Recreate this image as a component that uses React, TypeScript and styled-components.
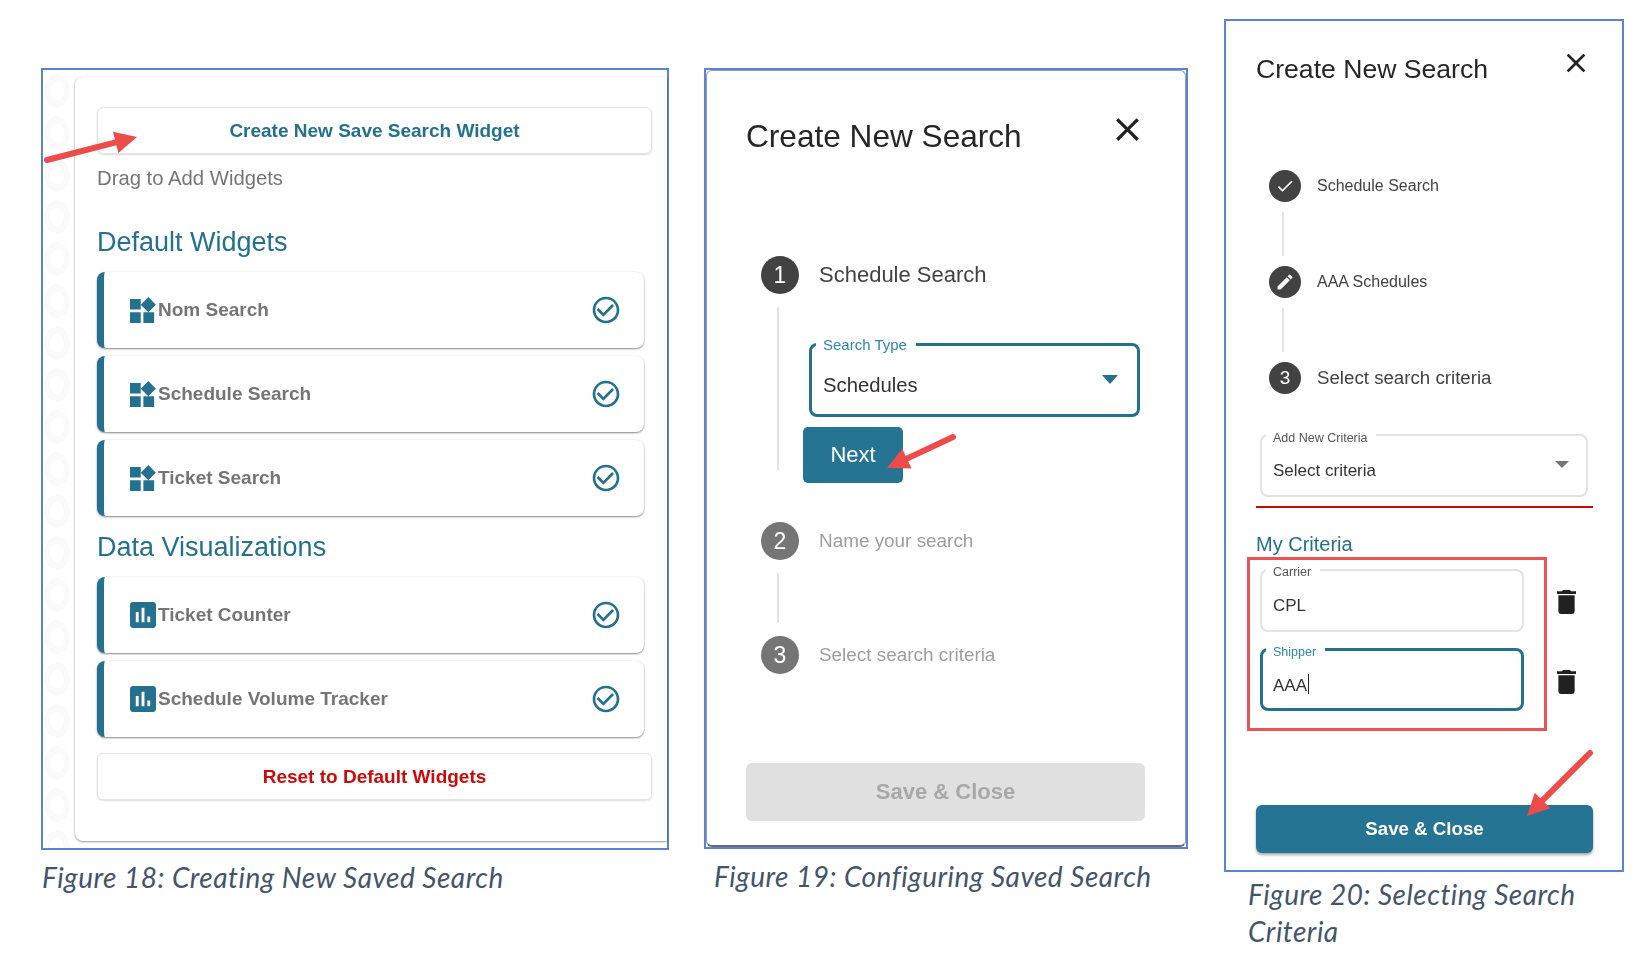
import React from 'react';
import styled, { createGlobalStyle } from 'styled-components';

const TEAL = '#23718f';
const FRAME_BLUE = '#5b82d4';
const SANS = '"Liberation Sans", Arial, sans-serif';

const GlobalStyle = createGlobalStyle`
  html, body {
    margin: 0;
    padding: 0;
    background: #fff;
    font-family: ${SANS};
  }
`;

const Page = styled.div`
  display: flex;
  align-items: flex-start;
  width: 1644px;
  height: 960px;
  padding-left: 41px;
  box-sizing: border-box;
  overflow: hidden;
`;

const Figure = styled.figure<{ $width: number; $top: number; $gap: number }>`
  width: ${({ $width }) => $width}px;
  margin: ${({ $top }) => $top}px 0 0 ${({ $gap }) => $gap}px;
  flex: none;
`;

const Frame = styled.div<{ $height: number }>`
  position: relative;
  height: ${({ $height }) => $height}px;
  box-sizing: border-box;
  border: 2px solid ${FRAME_BLUE};
  background: #fff;
  display: flex;
  filter: blur(0.4px);
`;

const Caption = styled.figcaption<{ $top: number; $left: number; $width?: number }>`
  margin: ${({ $top }) => $top}px 0 0 ${({ $left }) => $left}px;
  width: ${({ $width }) => ($width ? `${$width}px` : 'auto')};
  font: italic 400 28px/37px Lato, "Open Sans", sans-serif;
  letter-spacing: 0.5px;
  color: #44546a;
  white-space: ${({ $width }) => ($width ? 'normal' : 'nowrap')};
`;

const ArrowSvg = styled.svg`
  position: absolute;
  left: 0;
  top: 0;
  width: 100%;
  height: 100%;
  overflow: visible;
  pointer-events: none;
`;

function Arrow({ from, to }: { from: [number, number]; to: [number, number] }) {
  const angle = Math.atan2(to[1] - from[1], to[0] - from[0]);
  const len = 22;
  const half = 11;
  const bx = to[0] - Math.cos(angle) * len;
  const by = to[1] - Math.sin(angle) * len;
  const nx = -Math.sin(angle) * half;
  const ny = Math.cos(angle) * half;
  return (
    <ArrowSvg>
      <line x1={from[0]} y1={from[1]} x2={bx} y2={by} stroke="#ee4b4b" strokeWidth={6} strokeLinecap="round" />
      <polygon points={`${to[0]},${to[1]} ${bx + nx},${by + ny} ${bx - nx},${by - ny}`} fill="#ee4b4b" />
    </ArrowSvg>
  );
}

/* figure 18 */

const WatermarkStrip = styled.div`
  width: 32px;
  flex: none;
  background-color: #fff;
  background-image: radial-gradient(ellipse 13px 17px at 14px 21px, transparent 50%, #fafafa 58%, #fafafa 96%, transparent 100%);
  background-size: 32px 42px;
`;

const WidgetCard = styled.div`
  flex: 1;
  margin: 7px 0 7px;
  padding: 30px 15px 0 22px;
  background: #fff;
  border-radius: 8px 0 0 8px;
  box-shadow: 0 1px 2px rgba(0, 0, 0, 0.4), -1px 0 2px rgba(0, 0, 0, 0.06);
`;

const OutlineButton = styled.div<{ $color: string; $top: number }>`
  height: 47px;
  margin-top: ${({ $top }) => $top}px;
  box-sizing: border-box;
  display: flex;
  align-items: center;
  justify-content: center;
  border: 1px solid #e4e4e4;
  border-radius: 6px;
  box-shadow: 0 1px 2px rgba(0, 0, 0, 0.14);
  font-size: 19px;
  font-weight: 700;
  color: ${({ $color }) => $color};
`;

const DragHint = styled.div`
  margin-top: 12px;
  font-size: 20.3px;
  line-height: 24px;
  color: #757575;
`;

const GroupHeading = styled.h2<{ $top: number }>`
  margin: ${({ $top }) => $top}px 0 14px;
  font-size: 27px;
  font-weight: 400;
  line-height: 32px;
  color: ${TEAL};
`;

const WidgetList = styled.div`
  display: flex;
  flex-direction: column;
  gap: 8px;
  margin-right: 8px;
`;

const WidgetRow = styled.div`
  height: 76px;
  box-sizing: border-box;
  display: flex;
  align-items: center;
  padding: 0 25px 0 26px;
  border-left: 7px solid ${TEAL};
  border-radius: 8px;
  background: #fff;
  box-shadow: 0 1px 2px rgba(0, 0, 0, 0.45), 0 0 3px rgba(0, 0, 0, 0.06);
`;

const WidgetIcon = styled.svg`
  width: 26px;
  height: 26px;
  flex: none;
  fill: ${TEAL};
`;

const WidgetName = styled.span`
  margin-left: 2px;
  flex: 1;
  font-size: 19px;
  font-weight: 700;
  color: #757575;
`;

const CheckIcon = styled.svg`
  width: 32px;
  height: 32px;
  margin-right: -3px;
  flex: none;
  fill: ${TEAL};
`;

function Widget({ name, chart }: { name: string; chart?: boolean }) {
  return (
    <WidgetRow>
      {chart ? (
        <WidgetIcon viewBox="3 3 18 18">
          <path d="M19 3H5c-1.1 0-2 .9-2 2v14c0 1.1.9 2 2 2h14c1.1 0 2-.9 2-2V5c0-1.1-.9-2-2-2zM9 17H7v-7h2v7zm4 0h-2V7h2v10zm4 0h-2v-4h2v4z" />
        </WidgetIcon>
      ) : (
        <WidgetIcon viewBox="3 1.6 19.4 19.4">
          <path d="M13 13v8h8v-8h-8zM3 21h8v-8H3v8zM3 3v8h8V3H3zm13.66-1.31L11 7.34 16.66 13l5.66-5.66-5.66-5.65z" />
        </WidgetIcon>
      )}
      <WidgetName>{name}</WidgetName>
      <CheckIcon viewBox="0 0 24 24">
        <path d="M16.59 7.58 10 14.17l-3.59-3.58L5 12l5 5 8-8zM12 2C6.48 2 2 6.48 2 12s4.48 10 10 10 10-4.48 10-10S17.52 2 12 2zm0 18c-4.42 0-8-3.58-8-8s3.58-8 8-8 8 3.58 8 8-3.58 8-8 8z" />
      </CheckIcon>
    </WidgetRow>
  );
}

/* dialogs, figures 19 and 20 */

const Dialog = styled.div<{ $pad: string; $framed?: boolean }>`
  flex: 1;
  min-width: 0;
  display: flex;
  flex-direction: column;
  padding: ${({ $pad }) => $pad};
  border: ${({ $framed }) => ($framed ? '1px solid #8d9ea6' : 'none')};
  border-bottom-width: ${({ $framed }) => ($framed ? '2px' : '0')};
  border-bottom-color: #6a6a6a;
  border-radius: ${({ $framed }) => ($framed ? '6px' : '0')};
`;

const DialogHeader = styled.div`
  display: flex;
  justify-content: space-between;
  align-items: flex-start;
`;

const DialogTitle = styled.h1<{ $size: number; $line: number }>`
  margin: 0;
  font-size: ${({ $size }) => $size}px;
  line-height: ${({ $line }) => $line}px;
  font-weight: 400;
  color: #262626;
`;

const CloseIcon = styled.svg<{ $size: number; $shift: string }>`
  width: ${({ $size }) => $size}px;
  height: ${({ $size }) => $size}px;
  margin: ${({ $shift }) => $shift};
  fill: #212121;
  flex: none;
`;

const Stepper = styled.div<{ $top: number; $left: number }>`
  margin: ${({ $top }) => $top}px 0 0 ${({ $left }) => $left}px;
`;

const StepHead = styled.div<{ $gap: number }>`
  display: flex;
  align-items: center;
  gap: ${({ $gap }) => $gap}px;
`;

const StepCircle = styled.div<{ $size: number; $muted?: boolean; $font: number }>`
  width: ${({ $size }) => $size}px;
  height: ${({ $size }) => $size}px;
  flex: none;
  display: flex;
  align-items: center;
  justify-content: center;
  border-radius: 50%;
  background: ${({ $muted }) => ($muted ? '#757575' : '#424242')};
  color: #fff;
  font-size: ${({ $font }) => $font}px;
  svg {
    width: 20px;
    height: 20px;
    fill: #fff;
  }
`;

const StepLabel = styled.span<{ $size: number; $muted?: boolean }>`
  font-size: ${({ $size }) => $size}px;
  color: ${({ $muted }) => ($muted ? '#9e9e9e' : '#424242')};
`;

const StepBody = styled.div<{ $height?: number; $bottom?: number; $line: number }>`
  display: flex;
  min-height: ${({ $height }) => $height ?? 0}px;
  margin-left: ${({ $line }) => $line}px;
  padding-bottom: ${({ $bottom }) => $bottom ?? 0}px;
`;

const StepLine = styled.div<{ $inset: number }>`
  width: 2px;
  flex: none;
  margin: ${({ $inset }) => $inset}px 0;
  background: #e4e4e4;
`;

const StepContent = styled.div`
  margin: 49px 0 0 30px;
  flex: 1;
`;

const BottomFill = styled.div`
  margin-top: auto;
`;

const Field = styled.div<{ $w: number; $h: number; $active?: boolean }>`
  position: relative;
  width: ${({ $w }) => $w}px;
  height: ${({ $h }) => $h}px;
  box-sizing: border-box;
  border: ${({ $active }) => ($active ? `3px solid ${TEAL}` : '2px solid #e3e3e3')};
  border-radius: 8px;
  display: flex;
  align-items: center;
`;

const FieldLabel = styled.span<{ $active?: boolean; $size: number; $left: number; $top: number }>`
  position: absolute;
  left: ${({ $left }) => $left}px;
  top: ${({ $top }) => $top}px;
  padding: 0 9px 0 7px;
  background: #fff;
  font-size: ${({ $size }) => $size}px;
  line-height: 16px;
  color: ${({ $active }) => ($active ? '#2f86a8' : '#555')};
  white-space: nowrap;
`;

const FieldValue = styled.span<{ $size: number; $left: number; $down: number }>`
  margin: ${({ $down }) => $down}px 0 0 ${({ $left }) => $left}px;
  font-size: ${({ $size }) => $size}px;
  color: #333;
`;

const Cursor = styled.span`
  display: inline-block;
  width: 1px;
  height: 20px;
  margin-left: 1px;
  background: #222;
  vertical-align: -3px;
`;

const Caret = styled.span<{ $color: string; $half: number; $h: number; $right: number; $up: number }>`
  position: absolute;
  right: ${({ $right }) => $right}px;
  top: calc(50% - ${({ $up }) => $up}px);
  border-left: ${({ $half }) => $half}px solid transparent;
  border-right: ${({ $half }) => $half}px solid transparent;
  border-top: ${({ $h }) => $h}px solid ${({ $color }) => $color};
`;

const NextButton = styled.div`
  width: 100px;
  height: 56px;
  margin: 10px 0 0 -6px;
  display: flex;
  align-items: center;
  justify-content: center;
  background: #257494;
  border-radius: 5px;
  color: #fff;
  font-size: 22px;
`;

const SolidButton = styled.div<{ $disabled?: boolean; $h: number; $w: number; $size: number }>`
  width: ${({ $w }) => $w}px;
  height: ${({ $h }) => $h}px;
  display: flex;
  align-items: center;
  justify-content: center;
  border-radius: 6px;
  font-size: ${({ $size }) => $size}px;
  font-weight: 700;
  background: ${({ $disabled }) => ($disabled ? '#e0e0e0' : '#257494')};
  color: ${({ $disabled }) => ($disabled ? '#a8a8a8' : '#fff')};
  box-shadow: ${({ $disabled }) => ($disabled ? 'none' : '0 2px 3px rgba(0, 0, 0, 0.35)')};
`;

const ErrorRule = styled.div`
  width: 337px;
  height: 2px;
  margin: 9px 0 0;
  background: #cc0a0a;
`;

const CriteriaHeading = styled.div`
  margin-top: 23px;
  font-size: 20px;
  line-height: 26px;
  color: ${TEAL};
`;

const CriteriaArea = styled.div`
  display: flex;
  margin: 0 0 0 -9px;
`;

const Highlight = styled.div`
  width: 300px;
  height: 174px;
  box-sizing: border-box;
  padding: 9px 0 0 10px;
  border: 3px solid #ea5353;
  display: flex;
  flex-direction: column;
  gap: 16px;
`;

const TrashColumn = styled.div`
  margin-left: 10px;
  padding-top: 33px;
  display: flex;
  flex-direction: column;
  gap: 56px;
`;

const TrashIcon = styled.svg`
  width: 19px;
  height: 24px;
  fill: #212121;
`;

const closePath =
  'M19 6.41L17.59 5 12 10.59 6.41 5 5 6.41 10.59 12 5 17.59 6.41 19 12 13.41 17.59 19 19 17.59 13.41 12z';

function Trash() {
  return (
    <TrashIcon viewBox="5 3 14 18" preserveAspectRatio="none">
      <path d="M6 19c0 1.1.9 2 2 2h8c1.1 0 2-.9 2-2V7H6v12zM19 4h-3.5l-1-1h-5l-1 1H5v2h14V4z" />
    </TrashIcon>
  );
}

export default function App() {
  return (
    <Page>
      <GlobalStyle />

      <Figure $width={628} $top={68} $gap={0}>
        <Frame $height={782}>
          <WatermarkStrip />
          <WidgetCard>
            <OutlineButton $color={TEAL} $top={0}>Create New Save Search Widget</OutlineButton>
            <DragHint>Drag to Add Widgets</DragHint>
            <GroupHeading $top={36}>Default Widgets</GroupHeading>
            <WidgetList>
              <Widget name="Nom Search" />
              <Widget name="Schedule Search" />
              <Widget name="Ticket Search" />
            </WidgetList>
            <GroupHeading $top={15}>Data Visualizations</GroupHeading>
            <WidgetList>
              <Widget name="Ticket Counter" chart />
              <Widget name="Schedule Volume Tracker" chart />
            </WidgetList>
            <OutlineButton $color="#cc0a0a" $top={16}>Reset to Default Widgets</OutlineButton>
          </WidgetCard>
          <Arrow from={[4, 90]} to={[94, 67]} />
        </Frame>
        <Caption $top={9} $left={1}>Figure 18: Creating New Saved Search</Caption>
      </Figure>

      <Figure $width={484} $top={68} $gap={35}>
        <Frame $height={781}>
          <Dialog $framed $pad="45px 40px 24px 39px">
            <DialogHeader>
              <DialogTitle $size={31.6} $line={40}>Create New Search</DialogTitle>
              <CloseIcon viewBox="0 0 24 24" $size={39} $shift="-6px -2px 0 0"><path d={closePath} /></CloseIcon>
            </DialogHeader>
            <Stepper $top={100} $left={15}>
              <StepHead $gap={20}>
                <StepCircle $size={38} $font={23}>1</StepCircle>
                <StepLabel $size={22}>Schedule Search</StepLabel>
              </StepHead>
              <StepBody $line={16} $bottom={39}>
                <StepLine $inset={13} />
                <StepContent>
                  <Field $w={331} $h={74} $active>
                    <FieldLabel $active $size={15} $left={4} $top={-9}>Search Type</FieldLabel>
                    <FieldValue $size={20.3} $left={11} $down={11}>Schedules</FieldValue>
                    <Caret $color={TEAL} $half={8} $h={9} $right={19} $up={5} />
                  </Field>
                  <NextButton>Next</NextButton>
                </StepContent>
              </StepBody>
              <StepHead $gap={20}>
                <StepCircle $size={38} $font={23} $muted>2</StepCircle>
                <StepLabel $size={18.9} $muted>Name your search</StepLabel>
              </StepHead>
              <StepBody $line={16} $height={76}>
                <StepLine $inset={13} />
              </StepBody>
              <StepHead $gap={20}>
                <StepCircle $size={38} $font={23} $muted>3</StepCircle>
                <StepLabel $size={18.9} $muted>Select search criteria</StepLabel>
              </StepHead>
            </Stepper>
            <BottomFill>
              <SolidButton $disabled $h={58} $w={399} $size={22}>Save &amp; Close</SolidButton>
            </BottomFill>
          </Dialog>
          <Arrow from={[247, 367]} to={[181, 398]} />
        </Frame>
        <Caption $top={9} $left={10}>Figure 19: Configuring Saved Search</Caption>
      </Figure>

      <Figure $width={400} $top={19} $gap={36}>
        <Frame $height={853}>
          <Dialog $pad="31px 29px 17px 30px">
            <DialogHeader>
              <DialogTitle $size={26.6} $line={34}>Create New Search</DialogTitle>
              <CloseIcon viewBox="0 0 24 24" $size={32} $shift="-5px 1px 0 0"><path d={closePath} /></CloseIcon>
            </DialogHeader>
            <Stepper $top={84} $left={13}>
              <StepHead $gap={16}>
                <StepCircle $size={32} $font={19}>
                  <svg viewBox="0 0 24 24"><path d="M9 16.17L4.83 12l-1.41 1.41L9 19 21 7l-1.41-1.41z" /></svg>
                </StepCircle>
                <StepLabel $size={16}>Schedule Search</StepLabel>
              </StepHead>
              <StepBody $line={13} $height={64}>
                <StepLine $inset={10} />
              </StepBody>
              <StepHead $gap={16}>
                <StepCircle $size={32} $font={19}>
                  <svg viewBox="0 0 24 24"><path d="M3 17.25V21h3.75L17.81 9.94l-3.75-3.75L3 17.25zM20.71 7.04c.39-.39.39-1.02 0-1.41l-2.34-2.34c-.39-.39-1.02-.39-1.41 0l-1.83 1.83 3.75 3.75 1.83-1.83z" /></svg>
                </StepCircle>
                <StepLabel $size={16}>AAA Schedules</StepLabel>
              </StepHead>
              <StepBody $line={13} $height={64}>
                <StepLine $inset={10} />
              </StepBody>
              <StepHead $gap={16}>
                <StepCircle $size={32} $font={19}>3</StepCircle>
                <StepLabel $size={18.7}>Select search criteria</StepLabel>
              </StepHead>
            </Stepper>
            <Stepper $top={40} $left={4}>
              <Field $w={328} $h={63}>
                <FieldLabel $size={12.5} $left={4} $top={-6}>Add New Criteria</FieldLabel>
                <FieldValue $size={17} $left={11} $down={10}>Select criteria</FieldValue>
                <Caret $color="#757575" $half={7} $h={7} $right={17} $up={5} />
              </Field>
            </Stepper>
            <ErrorRule />
            <CriteriaHeading>My Criteria</CriteriaHeading>
            <CriteriaArea>
              <Highlight>
                <Field $w={264} $h={63}>
                  <FieldLabel $size={12.5} $left={4} $top={-7}>Carrier</FieldLabel>
                  <FieldValue $size={17} $left={11} $down={10}>CPL</FieldValue>
                </Field>
                <Field $w={264} $h={63} $active>
                  <FieldLabel $active $size={12.5} $left={3} $top={-7}>Shipper</FieldLabel>
                  <FieldValue $size={17} $left={10} $down={11}>AAA<Cursor /></FieldValue>
                </Field>
              </Highlight>
              <TrashColumn>
                <Trash />
                <Trash />
              </TrashColumn>
            </CriteriaArea>
            <BottomFill>
              <SolidButton $h={48} $w={337} $size={18.7}>Save &amp; Close</SolidButton>
            </BottomFill>
          </Dialog>
          <Arrow from={[364, 732]} to={[301, 795]} />
        </Frame>
        <Caption $top={4} $left={24} $width={350}>Figure 20: Selecting Search Criteria</Caption>
      </Figure>
    </Page>
  );
}
